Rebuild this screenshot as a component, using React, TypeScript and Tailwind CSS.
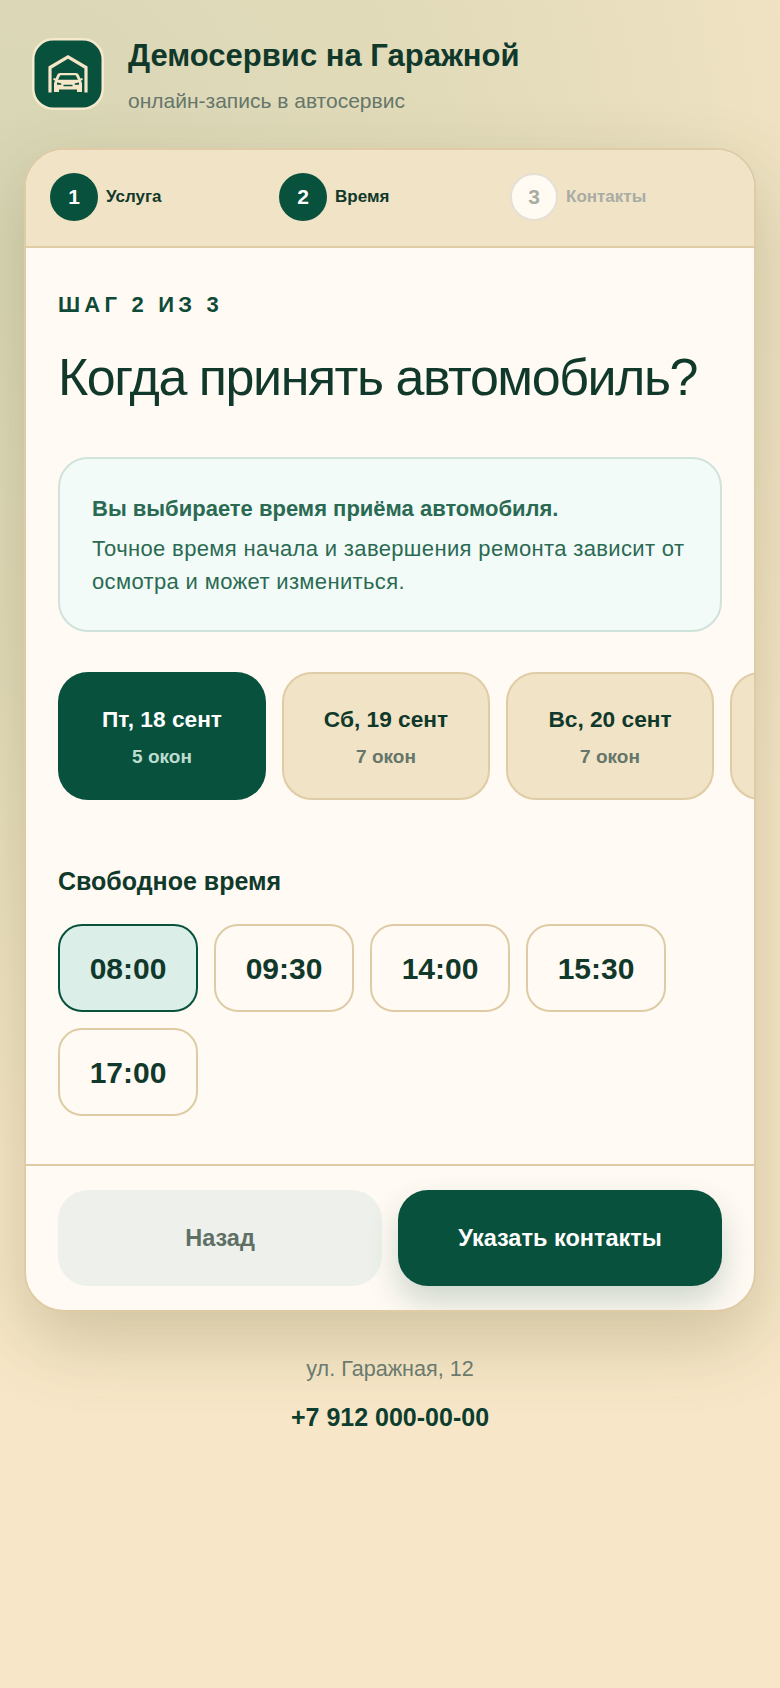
const Icon = () => (
  <svg viewBox="0 0 72 72" className="w-[72px] h-[72px] shrink-0">
    <rect x="1.25" y="1.25" width="69.500" height="69.500" rx="20" fill="#08513c" stroke="#f7e9cd" strokeWidth="2.500" />
    <path d="M18 54.500V29.500L36 18.800 54 29.500V54.500" fill="none" stroke="#f5e6c8" strokeWidth="3.200" />
    <path
      fillRule="evenodd"
      fill="#f5e6c8"
      d="M28 35h16c1.200 0 2.200.7 2.700 1.800l1.700 3.700 1.900-.5.500 1.800-1.900.9c.7.9 1.100 2 1.100 3.100V54h-5v-2.500H27V54h-5v-8.200c0-1.100.4-2.200 1.100-3.100l-1.900-.9.500-1.800 1.900.5 1.700-3.700C25.800 35.700 26.800 35 28 35zM28.300 37.300 26 41.700h20l-2.300-4.400zM25 44.600v2.200h4.500l-.5-1.600zM47 44.600l-4 .6-.5 1.600H47zM31.500 46.800v1.400h9v-1.400z"
    />
  </svg>
);

const dates = [
  { d: "Пт, 18 сент", s: "5 окон", on: true },
  { d: "Сб, 19 сент", s: "7 окон", on: false },
  { d: "Вс, 20 сент", s: "7 окон", on: false },
  { d: "", s: "", on: false },
];
const times = ["08:00", "09:30", "14:00", "15:30", "17:00"];

function Step({ n, label, state }: { n: number; label: string; state: "on" | "off" }) {
  return (
    <div className="flex items-center gap-[8px]">
      {state === "on" ? (
        <div className="w-[48px] h-[48px] rounded-full bg-[#08513c] text-white flex items-center justify-center text-[21px] font-bold">{n}</div>
      ) : (
        <div className="w-[48px] h-[48px] rounded-full bg-[#fffaf2] border-2 border-[#e4e0d6] text-[#a9aca4] flex items-center justify-center text-[21px] font-bold">{n}</div>
      )}
      <span className={state === "on" ? "text-[17px] font-bold text-[#10392b]" : "text-[17px] font-bold text-[#a9aca4]"}>{label}</span>
    </div>
  );
}

export default function App() {
  return (
    <div
      className="min-h-[1688px] w-[780px] px-[24px] pt-[38px] bg-[radial-gradient(circle_at_0%_10%,#d8d6b5_0%,#e4dcbb_30%,#f7e7c8_58%)] text-[#10392b]"
      style={{ fontFamily: '"Liberation Sans", Arial, sans-serif' }}
    >
      <header className="flex gap-[24px] px-[8px] h-[110px]">
        <Icon />
        <div>
          <h1 className="text-[31px] font-bold leading-[40px] -mt-[2px]">Демосервис на Гаражной</h1>
          <p className="text-[21px] leading-[28px] mt-[11px] text-[#66766a]">онлайн-запись в автосервис</p>
        </div>
      </header>

      <main className="w-[732px] h-[1164px] rounded-[40px] border-2 border-[#dfcca6] bg-[#fffaf3] overflow-hidden shadow-[0_28px_72px_rgba(80,80,30,0.24)] flex flex-col">
        <div className="h-[98px] bg-[#f1e3c6] border-b-2 border-[#dfcca6] grid grid-cols-[229px_231px_1fr] items-center pl-[24px] pb-[2px] shrink-0">
          <Step n={1} label="Услуга" state="on" />
          <Step n={2} label="Время" state="on" />
          <Step n={3} label="Контакты" state="off" />
        </div>

        <div className="flex-1 min-h-0 pt-[42px] overflow-hidden">
          <div className="px-[32px]">
            <div className="text-[22px] font-bold leading-[30px] tracking-[4.2px] text-[#0f4a38]">ШАГ 2 ИЗ 3</div>
            <h2 className="text-[52px] leading-[60px] mt-[27px] tracking-[-1.45px] font-normal whitespace-nowrap">Когда принять автомобиль?</h2>
            <div className="mt-[50px] h-[175px] rounded-[30px] border-2 border-[#cfe3da] bg-[#f2fbf8] px-[32px] pt-[35px] text-[#2b6a52]">
              <div className="text-[22px] font-bold leading-[30px]">Вы выбираете время приёма автомобиля.</div>
              <div className="text-[22px] leading-[33px] mt-[8px] tracking-[0.35px]">Точное время начала и завершения ремонта зависит от осмотра и может измениться.</div>
            </div>
          </div>

          <div className="flex gap-[16px] pl-[32px] mt-[40px] overflow-hidden">
            {dates.map((x, i) => (
              <div
                key={i}
                className={
                  x.on
                    ? "w-[208px] h-[128px] shrink-0 rounded-[30px] bg-[#08513c] flex flex-col items-center pt-[32px]"
                    : "w-[208px] h-[128px] shrink-0 rounded-[30px] bg-[#f1e3c6] border-2 border-[#dfcca6] flex flex-col items-center pt-[30px]"
                }
              >
                <div className={x.on ? "text-[22.700px] font-bold leading-[30px] text-white" : "text-[22.700px] font-bold leading-[30px] text-[#10392b]"}>{x.d}</div>
                <div className={x.on ? "text-[19px] font-bold leading-[24px] mt-[11px] text-[#bcdccf]" : "text-[19px] font-bold leading-[24px] mt-[11px] text-[#66766a]"}>{x.s}</div>
              </div>
            ))}
          </div>

          <div className="px-[32px] mt-[65px]">
            <div className="text-[25px] font-bold leading-[32px]">Свободное время</div>
            <div className="flex flex-wrap gap-[16px] mt-[27px]">
              {times.map((t, i) => (
                <div
                  key={t}
                  className={
                    i === 0
                      ? "w-[140px] h-[88px] rounded-[24px] border-2 border-[#08513c] bg-[#dceee8] flex items-center justify-center text-[30px] font-bold"
                      : "w-[140px] h-[88px] rounded-[24px] border-2 border-[#dfcca6] bg-[#fffaf3] flex items-center justify-center text-[30px] font-bold"
                  }
                >
                  {t}
                </div>
              ))}
            </div>
          </div>
        </div>

        <div className="h-[146px] border-t-2 border-[#dfcca6] flex gap-[16px] px-[32px] pt-[24px] shrink-0">
          <div className="w-[324px] h-[96px] rounded-[30px] bg-[#eef1eb] flex items-center justify-center text-[23.500px] font-bold text-[#5f6f66] pt-[1px]">Назад</div>
          <div className="w-[324px] h-[96px] rounded-[30px] bg-[#08513c] flex items-center justify-center text-[23.500px] font-bold text-white pt-[1px] shadow-[0_16px_32px_rgba(8,81,60,0.2)]">Указать контакты</div>
        </div>
      </main>

      <footer className="text-center pt-[42px]">
        <div className="text-[21.600px] leading-[30px] text-[#6a7a6e]">ул. Гаражная, 12</div>
        <div className="text-[25px] font-bold leading-[32px] mt-[17px] text-[#0c3d2e]">+7 912 000-00-00</div>
      </footer>
    </div>
  );
}
